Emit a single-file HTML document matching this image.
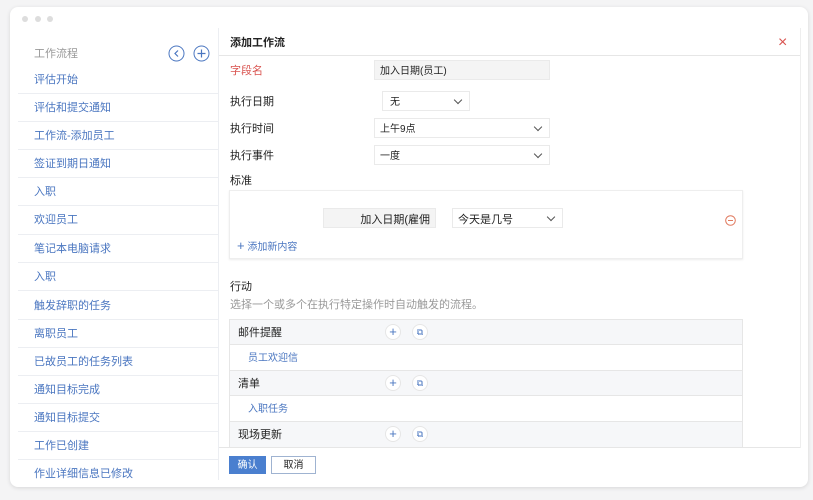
<!DOCTYPE html>
<html><head><meta charset="utf-8"><style>
*{margin:0;padding:0;box-sizing:border-box}
body{width:813px;height:500px;background:#f4f4f5;font-family:"Liberation Sans","Noto Sans CJK SC",sans-serif;font-size:11px;color:#222;position:relative;overflow:hidden;line-height:1.45}
.card{position:absolute;left:10px;top:7px;width:798px;height:480px;background:#fff;border-radius:8px;box-shadow:0 1px 4px rgba(0,0,0,.12)}
.dot{position:absolute;top:16px;width:6px;height:6px;border-radius:50%;background:#ddd}
.a{position:absolute}
.si,.lbl,.t{transform:translateY(2px)}
.si{position:absolute;left:16px;color:#4a76c0;font-size:11px}
.sep{position:absolute;left:18px;width:200px;height:1px;background:#eceef2}
.lbl{position:absolute;left:230px;font-size:11px;color:#222}
.box{position:absolute;border:1px solid #eaeaea;background:#fff;font-size:10px;padding-left:5px;padding-top:3px;display:flex;align-items:center;line-height:14px}
.chev{position:absolute;right:8px;top:5px;width:6px;height:6px;border-right:1.2px solid #555;border-bottom:1.2px solid #555;transform:rotate(45deg)}
.circ{position:absolute;width:16px;height:16px;border:1px solid #e6e6e6;border-radius:50%;color:#4a76c0;font-size:13px;line-height:13px;text-align:center;background:#fff}
</style></head><body>
<div class="card"></div>
<div class="dot" style="left:22px"></div><div class="dot" style="left:35px"></div><div class="dot" style="left:47px"></div>
<div class="a" style="left:218px;top:28px;width:1px;height:452px;background:#eceef2"></div>
<div class="a" style="left:800px;top:28px;width:1px;height:420px;background:#eee"></div>
<div class="a t" style="left:34px;top:45px;color:#999;font-size:11px">工作流程</div>
<svg class="a" style="left:168px;top:45px" width="17" height="17"><circle cx="8.5" cy="8.5" r="7.5" fill="none" stroke="#4a76c0"/><path d="M10 5.5 7 8.5 10 11.5" fill="none" stroke="#4a76c0" stroke-width="1.2"/></svg>
<svg class="a" style="left:193px;top:45px" width="17" height="17"><circle cx="8.5" cy="8.5" r="7.5" fill="none" stroke="#4a76c0"/><path d="M8.5 4.5v8M4.5 8.5h8" stroke="#4a76c0" stroke-width="1.2"/></svg>

<div class="si" style="left:34px;top:71px">评估开始</div><div class="sep" style="top:93px"></div>
<div class="si" style="left:34px;top:99px">评估和提交通知</div><div class="sep" style="top:121px"></div>
<div class="si" style="left:34px;top:127px">工作流-添加员工</div><div class="sep" style="top:149px"></div>
<div class="si" style="left:34px;top:155px">签证到期日通知</div><div class="sep" style="top:177px"></div>
<div class="si" style="left:34px;top:183px">入职</div><div class="sep" style="top:205px"></div>
<div class="si" style="left:34px;top:211px">欢迎员工</div><div class="sep" style="top:234px"></div>
<div class="si" style="left:34px;top:240px">笔记本电脑请求</div><div class="sep" style="top:262px"></div>
<div class="si" style="left:34px;top:268px">入职</div><div class="sep" style="top:290px"></div>
<div class="si" style="left:34px;top:297px">触发辞职的任务</div><div class="sep" style="top:319px"></div>
<div class="si" style="left:34px;top:325px">离职员工</div><div class="sep" style="top:347px"></div>
<div class="si" style="left:34px;top:353px">已故员工的任务列表</div><div class="sep" style="top:375px"></div>
<div class="si" style="left:34px;top:381px">通知目标完成</div><div class="sep" style="top:403px"></div>
<div class="si" style="left:34px;top:409px">通知目标提交</div><div class="sep" style="top:431px"></div>
<div class="si" style="left:34px;top:437px">工作已创建</div><div class="sep" style="top:459px"></div>
<div class="si" style="left:34px;top:465px">作业详细信息已修改</div>

<div class="a t" style="left:230px;top:34px;font-weight:bold;font-size:11px">添加工作流</div>
<div class="a" style="left:778px;top:33px;color:#d9534f;font-size:16px;line-height:1.2">×</div>
<div class="a" style="left:219px;top:55px;width:581px;height:1px;background:#e6e6e6"></div>

<div class="lbl" style="top:62px;color:#d9534f">字段名</div>
<div class="box" style="left:374px;top:60px;width:176px;height:20px;background:#f4f4f4">加入日期(员工)</div>
<div class="lbl" style="top:93px">执行日期</div>
<div class="box" style="left:382px;top:91px;width:88px;height:20px;padding-left:7px">无<span class="chev"></span></div>
<div class="lbl" style="top:120px">执行时间</div>
<div class="box" style="left:374px;top:118px;width:176px;height:20px">上午9点<span class="chev"></span></div>
<div class="lbl" style="top:147px">执行事件</div>
<div class="box" style="left:374px;top:145px;width:176px;height:20px">一度<span class="chev"></span></div>
<div class="lbl" style="top:172px">标准</div>

<div class="a" style="left:229px;top:190px;width:514px;height:69px;border:1px solid #eee;box-shadow:0 1px 2px rgba(0,0,0,.08)"></div>
<div class="box" style="left:323px;top:208px;width:113px;height:20px;background:#f4f4f4;justify-content:flex-end;padding-right:5px;font-size:11px">加入日期(雇佣</div>
<div class="box" style="left:452px;top:208px;width:111px;height:20px;font-size:11px">今天是几号<span class="chev"></span></div>
<svg class="a" style="left:725px;top:215px" width="11" height="11"><circle cx="5.5" cy="5.5" r="4.8" fill="none" stroke="#e07a5f"/><path d="M3 5.5h5" stroke="#e07a5f"/></svg>
<div class="a t" style="left:237px;top:235px;color:#4a76c0;font-size:10px"><span style="font-size:13px">+</span> 添加新内容</div>

<div class="lbl" style="top:278px">行动</div>
<div class="a t" style="left:230px;top:296px;color:#999;font-size:11px">选择一个或多个在执行特定操作时自动触发的流程。</div>

<div class="a" style="left:229px;top:319px;width:514px;height:128px;border:1px solid #e6e6e6;border-bottom:none"></div>
<div class="a" style="left:230px;top:320px;width:512px;height:25px;background:#f6f7f9;border-bottom:1px solid #e6e6e6"></div>
<div class="a" style="left:230px;top:370px;width:512px;height:26px;background:#f6f7f9;border-top:1px solid #e6e6e6;border-bottom:1px solid #e6e6e6"></div>
<div class="a" style="left:230px;top:421px;width:512px;height:26px;background:#f6f7f9;border-top:1px solid #e6e6e6"></div>
<div class="a t" style="left:238px;top:324px;font-size:11px">邮件提醒</div>
<div class="a t" style="left:248px;top:350px;color:#4a76c0;font-size:10px">员工欢迎信</div>
<div class="a t" style="left:238px;top:375px;font-size:11px">清单</div>
<div class="a t" style="left:248px;top:401px;color:#4a76c0;font-size:10px">入职任务</div>
<div class="a t" style="left:238px;top:426px;font-size:11px">现场更新</div>
<div class="circ" style="left:385px;top:324px">+</div><div class="circ" style="left:412px;top:324px;font-size:9px;line-height:14px">⧉</div>
<div class="circ" style="left:385px;top:375px">+</div><div class="circ" style="left:412px;top:375px;font-size:9px;line-height:14px">⧉</div>
<div class="circ" style="left:385px;top:426px">+</div><div class="circ" style="left:412px;top:426px;font-size:9px;line-height:14px">⧉</div>

<div class="a" style="left:219px;top:447px;width:581px;height:1px;background:#e6e6e6"></div>
<div class="a" style="left:229px;top:456px;width:37px;height:18px;background:#4a7fcf;color:#fff;font-size:10px;text-align:center;line-height:20px">确认</div>
<div class="a" style="left:271px;top:456px;width:45px;height:18px;border:1px solid #9fb3d1;font-size:10px;text-align:center;line-height:18px">取消</div>
</body></html>
